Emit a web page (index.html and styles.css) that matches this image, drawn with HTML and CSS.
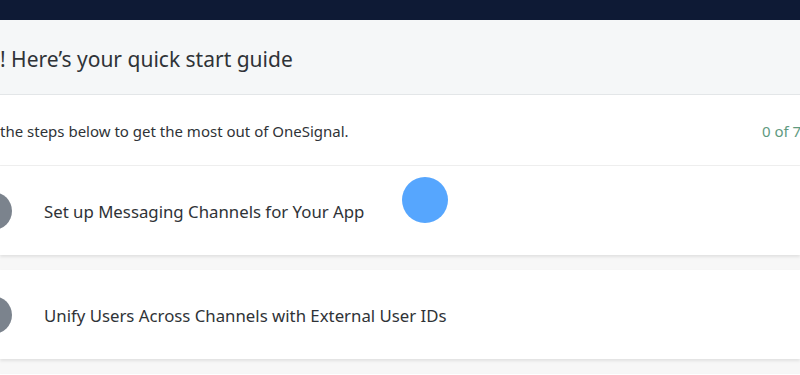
FILE: index.html
```html
<!DOCTYPE html>
<html lang="en">
<head>
  <meta charset="UTF-8" />
  <meta name="viewport" content="width=device-width, initial-scale=1.0"/>
  <title>Quick Start Guide</title>
  <link rel="stylesheet" href="styles.css">
</head>
<body>
  <!-- Top Bar -->
  <div class="topbar"></div>

  <!-- Guide Header -->
  <div class="guide-head">
    <h2>! Here’s your quick start guide</h2>
  </div>

  <div class="guide-intro">
    <p>the steps below to get the most out of OneSignal.</p>
    <span class="progress">0 of 7</span>
  </div>

  <!-- Steps -->
  <div class="steps">
    <div class="step">
      <div class="step-dot"></div>
      <span class="step-title">Set up Messaging Channels for Your App</span>
    </div>
    <div class="step">
      <div class="step-dot"></div>
      <span class="step-title">Unify Users Across Channels with External User IDs</span>
    </div>
    <div class="step"></div>
  </div>

  <!-- Click marker -->
  <div class="click-marker"></div>
</body>
</html>
```

FILE: styles.css
```css
* {
  box-sizing: border-box;
}
body {
  margin: 0;
  font-family: "Noto Sans", "Open Sans", sans-serif;
  color: #2f3337;
  background-color: #f7f7f7;
  overflow: hidden;
  height: 375px;
}
.topbar {
  height: 20px;
  background-color: #0e1a35;
}
.guide-head {
  height: 75px;
  background-color: #f5f7f8;
  border-bottom: 1px solid #e3e6e8;
}
.guide-head h2 {
  margin: 0;
  font-size: 21px;
  font-weight: normal;
  line-height: 78px;
  color: #2f3337;
  white-space: nowrap;
}
.guide-intro {
  height: 71px;
  background: white;
  border-bottom: 1px solid #efefef;
  display: flex;
  align-items: center;
  justify-content: space-between;
  padding-top: 2px;
  margin-right: -24px;
}
.guide-intro p {
  margin: 0;
  font-size: 15px;
}
.progress {
  font-size: 15px;
  color: #5f9a7f;
  width: 62px;
}
.steps {
  display: flex;
  flex-direction: column;
  gap: 15px;
}
.step {
  height: 89px;
  background: white;
  display: flex;
  align-items: center;
  gap: 32px;
  box-shadow: 0 2px 3px rgba(0, 0, 0, 0.09);
}
.step-dot {
  width: 38px;
  height: 38px;
  margin-left: -26px;
  border-radius: 50%;
  background-color: #7b838d;
  flex-shrink: 0;
}
.step-title {
  font-size: 16.8px;
  padding-top: 2px;
  white-space: nowrap;
}
.click-marker {
  position: absolute;
  left: 402px;
  top: 177px;
  width: 46px;
  height: 46px;
  border-radius: 50%;
  background-color: #56a6fe;
}
```
